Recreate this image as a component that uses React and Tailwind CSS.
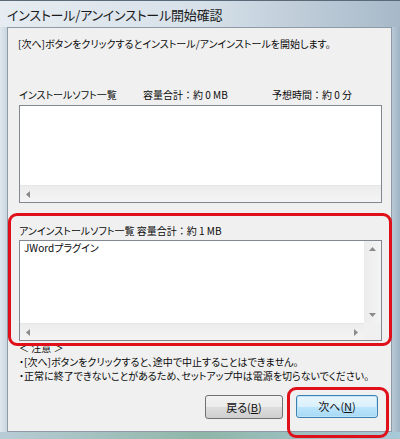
import React from "react";

const jp = "font-['MS_UI_Gothic','Noto_Sans_CJK_JP',sans-serif] [font-feature-settings:'palt']";

function C() {
  return <span className="[font-feature-settings:normal]">：</span>;
}

function ArrowLeft() {
  return (
    <svg width="5" height="7" viewBox="0 0 5 7"><path d="M4 0 L0 3.5 L4 7 Z" fill="#8a8a8a" /></svg>
  );
}
function ArrowRight() {
  return (
    <svg width="5" height="7" viewBox="0 0 5 7"><path d="M1 0 L5 3.5 L1 7 Z" fill="#8a8a8a" /></svg>
  );
}
function ArrowUp() {
  return (
    <svg width="7" height="5" viewBox="0 0 7 5"><path d="M0 4 L3.5 0 L7 4 Z" fill="#8a8a8a" /></svg>
  );
}
function ArrowDown() {
  return (
    <svg width="7" height="5" viewBox="0 0 7 5"><path d="M0 1 L3.5 5 L7 1 Z" fill="#8a8a8a" /></svg>
  );
}

function HScroll({ showRight }) {
  return (
    <div className="h-[17px] flex items-center bg-gradient-to-b from-[#ececec] to-[#f4f4f4] border-t border-[#e6e6e6]">
      <div className="w-[17px] flex justify-center"><ArrowLeft /></div>
      <div className="flex-1" />
      {showRight && <div className="w-[17px] flex justify-center"><ArrowRight /></div>}
    </div>
  );
}

export default function App() {
  return (
    <div className={`w-[400px] h-[439px] relative overflow-hidden bg-gradient-to-r from-[#d8e2ea] via-[#c9d7e2] to-[#aebfcd] ${jp}`}>
      {/* title bar */}
      <div className="h-[27px] flex items-center pl-[7px] border-t border-[#5a6a78] bg-gradient-to-r from-[#e6ecf1] via-[#d7e1e9] to-[#a7b9c9]">
        <span className="text-[13px] text-[#1a1a1a] tracking-[-0.2px] leading-none">インストール/アンインストール開始確認</span>
      </div>
      <div className="flex h-[405px]">
        <div className="w-[7px] bg-gradient-to-r from-[#dfe7ee] to-[#c9d6e0]" />
        <div className="w-[385px] border border-[#8e9aa5] bg-[#f0f0f0] flex flex-col text-[10px] text-[#0a0a0a] leading-none">
          <div className="pl-[10px] mt-[11px] h-[12px]">[次へ]ボタンをクリックするとインストール/アンインストールを開始します。</div>
          <div className="pl-[11px] mt-[39px] h-[12px] flex">
            <span className="w-[124px]">インストールソフト一覧</span>
            <span className="w-[129px]">容量合計<C />約 0 MB</span>
            <span>予想時間<C />約 0 分</span>
          </div>
          <div className="ml-[11px] mt-[3px] w-[363px] h-[98px] border border-[#828790] bg-white flex flex-col">
            <div className="flex-1" />
            <HScroll showRight={false} />
          </div>
          <div className="pl-[11px] mt-[23px] h-[12px]">アンインストールソフト一覧 容量合計<C />約 1 MB</div>
          <div className="ml-[11px] mt-[2px] w-[363px] h-[101px] border border-[#828790] bg-white flex flex-col">
            <div className="flex-1 flex">
              <div className="flex-1 pl-[4px] pt-[2px]">JWordプラグイン</div>
              <div className="w-[17px] bg-gradient-to-r from-[#ececec] to-[#f4f4f4] flex flex-col items-center justify-between py-[6px]">
                <ArrowUp />
                <ArrowDown />
              </div>
            </div>
            <div className="flex">
              <div className="flex-1"><HScroll showRight={true} /></div>
              <div className="w-[17px] h-[17px] bg-[#f0f0f0]" />
            </div>
          </div>
          <div className="pl-[11px] mt-[1px] flex flex-col gap-[2px] leading-[12px]">
            <div>＜ 注意 ＞</div>
            <div>・[次へ]ボタンをクリックすると、途中で中止することはできません。</div>
            <div>・正常に終了できないことがあるため、セットアップ中は電源を切らないでください。</div>
          </div>
          <div className="flex justify-end gap-[13px] pr-[13px] mt-[13px]">
            <button className="w-[78px] h-[24px] rounded-[3px] border border-[#707070] bg-[linear-gradient(#f2f2f2_0%,#ebebeb_50%,#dddddd_50%,#cfcfcf_100%)] text-[11px] text-[#111] flex items-center justify-center">
              戻る(<span className="underline">B</span>)
            </button>
            <button className="w-[82px] h-[23px] rounded-[3px] border border-[#3c7fb1] shadow-[inset_0_0_0_1px_#bfe5fa] bg-[linear-gradient(#eaf6fd_0%,#d9f0fc_50%,#bee6fd_50%,#a7d9f5_100%)] text-[11px] text-[#111] flex items-center justify-center">
              次へ(<span className="underline">N</span>)
            </button>
          </div>
        </div>
        <div className="w-[8px] bg-gradient-to-r from-[#b9cad7] to-[#9fb3c3]" />
      </div>
      <div className="h-[7px] bg-gradient-to-r from-[#b8ccd6] via-[#8fb6a8] to-[#a8c9d8]" />

      {/* red annotation frames */}
      <div className="absolute left-[8px] top-[213px] w-[384px] h-[133px] border-[3px] border-[#e0101a] rounded-[9px]" />
      <div className="absolute left-[287px] top-[387px] w-[102px] h-[51px] border-[3px] border-[#e0101a] rounded-[9px]" />
    </div>
  );
}
